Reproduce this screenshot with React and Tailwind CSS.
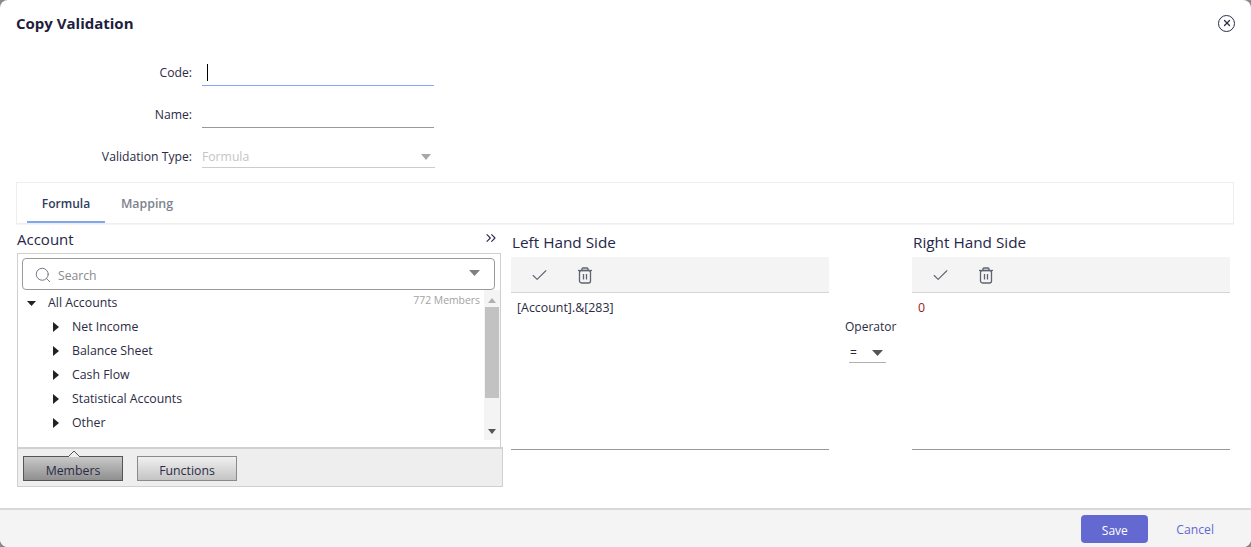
import React from 'react'
import { Check, Search, ChevronsRight, X } from 'lucide-react'

const treeItems = ['Net Income', 'Balance Sheet', 'Cash Flow', 'Statistical Accounts', 'Other']

function Caret({ className }) {
  return (
    <svg width="12" height="7" viewBox="0 0 12 7" preserveAspectRatio="none" className={className}>
      <path d="M0 0h12L6 7z" fill="currentColor" />
    </svg>
  )
}

function CaretRight() {
  return (
    <svg width="6" height="10" viewBox="0 0 6 10" className="text-[#222]">
      <path d="M0 0l6 5-6 5z" fill="currentColor" />
    </svg>
  )
}

function TrashIcon() {
  return (
    <svg width="16" height="17" viewBox="0 0 16 17" fill="none" stroke="currentColor" strokeWidth="1.3">
      <path d="M1 3.5h14" />
      <path d="M5 3.5V2a1 1 0 0 1 1-1h4a1 1 0 0 1 1 1v1.5" />
      <rect x="2.5" y="3.5" width="11" height="12.5" rx="2" />
      <path d="M6.5 7v5.5M9.5 7v5.5" />
    </svg>
  )
}

function FormRow({ label, border, rowClass, labelClass = 'pb-[4px]', boxClass = 'w-[232px]', children }) {
  return (
    <div className={`flex items-end ${rowClass}`}>
      <span className={`w-[192px] text-right text-[12.2px] leading-[18px] text-[#2b2b45] ${labelClass}`}>{label}</span>
      <div className={`ml-[10px] h-[26px] border-b ${border} ${boxClass} flex items-center`}>{children}</div>
    </div>
  )
}

function Editor({ title, value, valueClass }) {
  return (
    <div className="flex flex-col w-[318px]">
      <h2 className="text-[15.3px] leading-[20px] pl-[1px] font-normal text-[#26264a]">{title}</h2>
      <div className="mt-[5px] h-[36px] pt-[1px] bg-[#f4f4f4] border-b border-[#d4d4d4] flex items-center pl-[19px] gap-[28px] text-[#5f6470]">
        <Check size={19} strokeWidth={1.4} />
        <TrashIcon />
      </div>
      <div className={`h-[157px] border-b border-[#999] pl-[6px] pt-[6px] text-[12.4px] leading-[18px] ${valueClass}`}>
        {value}
      </div>
    </div>
  )
}

export default function App() {
  return (
    <div className="w-[1251px] h-[547px] overflow-hidden bg-[#8a8a8a] font-['Open_Sans',sans-serif]">
      <div className="w-full h-full bg-white rounded-[8px] overflow-hidden flex flex-col">
        <div className="flex items-center justify-between h-[48px] pb-[2px] pl-[16px] pr-[16px]">
          <h1 className="text-[15px] font-bold text-[#1e1e3c]">Copy Validation</h1>
          <div className="w-[17px] h-[17px] rounded-full border-[1.5px] border-[#2b2b4d] flex items-center justify-center text-[#2b2b4d]">
            <X size={10} strokeWidth={3} />
          </div>
        </div>

        <div className="flex flex-col">
          <FormRow label="Code:" border="border-[#7fa8ee]" rowClass="mt-[-10px] h-[48px]">
            <span className="ml-[5px] w-px h-[17px] bg-black" />
          </FormRow>
          <FormRow label="Name:" border="border-[#999]" rowClass="h-[42px]" />
          <FormRow
            label="Validation Type:"
            border="border-[#ccc]"
            rowClass="h-[40px]"
            labelClass="pb-[2px]"
            boxClass="w-[233px]"
          >
            <div className="flex items-center justify-between w-full pt-[5px] pr-[4px] text-[12.2px] text-[#c4c4c4]">
              <span>Formula</span>
              <Caret className="text-[#a8a8a8] w-[10px] h-[6px]" />
            </div>
          </FormRow>
        </div>

        <div className="mx-[16px] mt-[14px] h-[42px] w-[1218px] border border-[#eeeeee] flex pl-[10px] shadow-[0_1px_1px_rgba(0,0,0,0.04)]">
          <div className="w-[78px] h-full pt-[3px] border-b-2 border-[#7fa8ee] flex items-center justify-center text-[12px] font-semibold text-[#2f3c5e]">
            Formula
          </div>
          <div className="w-[84px] h-full pt-[2px] flex items-center justify-center text-[12.4px] font-semibold text-[#7c838f]">
            Mapping
          </div>
        </div>

        <div className="flex flex-1 pl-[17px]">
          <div className="w-[486px] flex flex-col">
            <div className="flex items-center justify-between h-[29px] pr-[4px] pt-[2px]">
              <span className="text-[15px] text-[#26264a]">Account</span>
              <ChevronsRight size={16} strokeWidth={1.6} className="text-[#26264a] mb-[3px]" />
            </div>
            <div className="w-[484px] h-[194px] border border-[#d0d0d0] border-b-0 flex flex-col">
              <div className="ml-[4px] mr-[5px] mt-[4px] h-[32px] border border-[#9a9a9a] rounded-[4px] flex items-center pl-[11px] pr-[14px]">
                <Search size={18} strokeWidth={1.3} className="text-[#6f7682] mt-[2px]" />
                <span className="ml-[6px] pt-[5px] text-[12.2px] text-[#8a8a8a] flex-1">Search</span>
                <Caret className="text-[#808080] w-[11px] h-[6px] mb-[2px]" />
              </div>
              <div className="flex flex-1">
                <div className="flex-1 flex flex-col pt-[1px]">
                  <div className="h-[24px] flex items-center pl-[9px]">
                    <Caret className="text-[#222] w-[9px] h-[5px]" />
                    <span className="ml-[12px] text-[12.3px] text-[#2b2b45] flex-1">All Accounts</span>
                    <span className="text-[10.4px] text-[#a3a3a3] pr-[4px] mb-[4px]">772 Members</span>
                  </div>
                  {treeItems.map((item) => (
                    <div key={item} className="h-[24px] flex items-center pl-[35px]">
                      <CaretRight />
                      <span className="ml-[13px] text-[12.3px] text-[#2b2b45]">{item}</span>
                    </div>
                  ))}
                </div>
                <div className="w-[16px] h-[150px] bg-[#f4f4f4] flex flex-col items-center">
                  <svg width="8" height="5" viewBox="0 0 8 5" className="mt-[8px] text-[#b0b0b0]">
                    <path d="M0 5h8L4 0z" fill="currentColor" />
                  </svg>
                  <div className="mt-[4px] w-[14px] h-[91px] bg-[#c2c2c2]" />
                  <svg width="8" height="5" viewBox="0 0 8 5" className="mt-[31px] text-[#555]">
                    <path d="M0 0h8L4 5z" fill="currentColor" />
                  </svg>
                </div>
              </div>
            </div>
            <div className="w-[486px] h-[40px] bg-[#eeeeee] border border-[#d0d0d0] border-t-2 flex items-start pl-[5px] pt-[7px] gap-[14px]">
              <div className="relative w-[100px] h-[25px] pt-[6px] border border-[#555] bg-gradient-to-b from-[#c9c9c9] to-[#8f8f8f] flex items-center justify-center text-[12.3px] text-[#2b2b45] font-medium">
                Members
                <svg width="12" height="6" viewBox="0 0 12 6" className="absolute top-[-6px] left-[44px]">
                  <path d="M0 6L6 0l6 6" fill="#eeeeee" stroke="#555" />
                </svg>
              </div>
              <div className="w-[100px] h-[25px] pt-[6px] border border-[#8a8a8a] bg-gradient-to-b from-[#f0f0f0] to-[#c4c4c4] flex items-center justify-center text-[12.3px] text-[#2b2b45] font-medium">
                Functions
              </div>
            </div>
          </div>

          <div className="ml-[8px] pt-[8px] flex items-start">
            <Editor title="Left Hand Side" value="[Account].&[283]" valueClass="text-[#2b2b45]" />
            <div className="w-[83px] pt-[86px] flex flex-col items-start">
              <span className="ml-[16px] text-[12px] leading-[18px] text-[#2b2b45]">Operator</span>
              <div className="ml-[20px] mt-[7px] w-[37px] h-[20px] border-b border-[#b0b0b0] flex items-center justify-between pl-[1px] pr-[3px] text-[12px] text-[#2b2b45]">
                <span>=</span>
                <Caret className="text-[#555] w-[11px] h-[6px]" />
              </div>
            </div>
            <Editor title="Right Hand Side" value="0" valueClass="text-[#a01818]" />
          </div>
        </div>

        <div className="h-[39px] bg-[#f4f4f4] border-t-2 border-[#d8d8d8] flex items-center justify-end pr-[37px]">
          <button className="w-[67px] h-[28px] pt-[4px] rounded-[4px] bg-[#6369d1] text-white text-[12px] font-medium">Save</button>
          <span className="ml-[28px] pt-[3px] text-[12.2px] text-[#6369d1]">Cancel</span>
        </div>
      </div>
    </div>
  )
}
